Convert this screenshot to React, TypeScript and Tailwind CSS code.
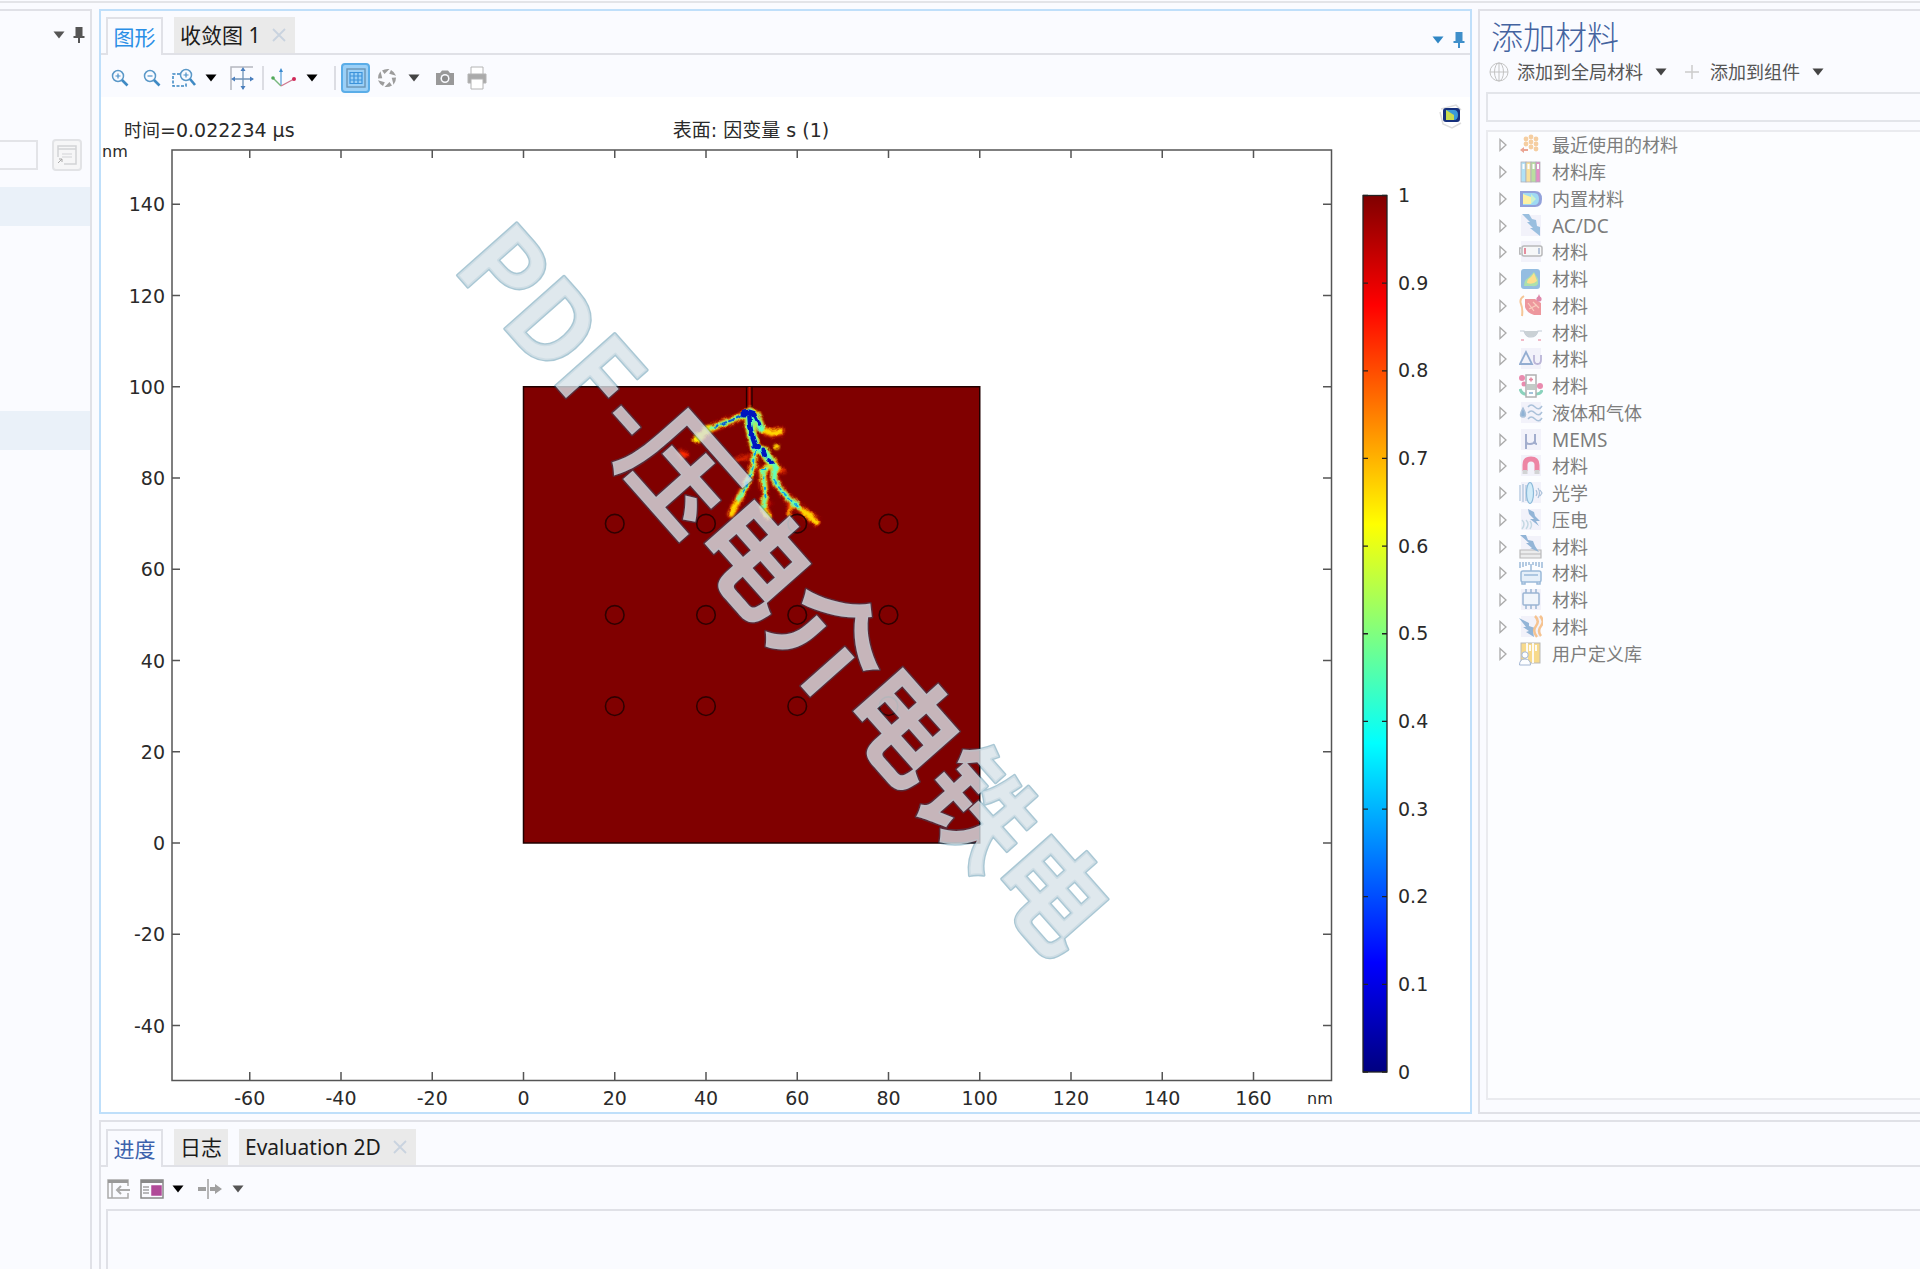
// Simulation workbench: 2D surface plot, material browser and progress pane.
import type { ReactNode } from "react";

const X0 = 523.5;
const Y0 = 843;
const UNIT = 4.5625;
const px = (v: number) => X0 + v * UNIT;
const py = (v: number) => Y0 - v * UNIT;

const X_TICKS = [-60, -40, -20, 0, 20, 40, 60, 80, 100, 120, 140, 160];
const Y_TICKS = [140, 120, 100, 80, 60, 40, 20, 0, -20, -40];
const LEGEND = ["1", "0.9", "0.8", "0.7", "0.6", "0.5", "0.4", "0.3", "0.2", "0.1", "0"];
const HOLES = [70, 50, 30].flatMap((y) => [20, 40, 60, 80].map((x) => ({ x, y })));

function Caret({ className = "text-black" }: { className?: string }) {
  return (
    <svg viewBox="0 0 12 8" className={`w-3 h-2 ${className}`} fill="currentColor">
      <path d="M0.5 0.5h11L6 7.5z" />
    </svg>
  );
}

function Pin({ className }: { className: string }) {
  return (
    <svg viewBox="0 0 12 18" className={`w-3 h-[18px] ${className}`} fill="currentColor">
      <path d="M2.5 1h7v9h2v2H7v5H5v-5H.5v-2h2z" />
    </svg>
  );
}

function Tint() {
  return <rect x="2" y="1" width="20" height="21" fill="#e4e2f4" stroke="none" opacity=".8" />;
}

const BOLT = "M3 0h7l3 5 4 1 1 6 3 1 0 9-10-8h3l-6-6h3z";

const icons: Record<string, ReactNode> = {
  recent: (
    <g fill="#f0a045">
      {[
        [7, 6], [12, 4], [17, 6], [7, 11], [12, 9], [17, 11], [12, 14], [17, 16],
      ].map(([x, y]) => (
        <circle key={`${x}-${y}`} cx={x} cy={y} r="2.4" />
      ))}
      <path d="M1 17l4-3v2h4v2H5v2z" fill="#d94f2b" />
    </g>
  ),
  library: (
    <g stroke="#667" strokeWidth=".8">
      <rect x="2" y="2" width="5" height="20" fill="#66c6ee" />
      <rect x="7" y="2" width="5" height="20" fill="#f5c43c" />
      <rect x="12" y="2" width="5" height="20" fill="#7bc143" />
      <rect x="17" y="2" width="4" height="20" fill="#d0218f" />
      <path d="M4.5 4v5M9.5 4v5M14.5 4v5M19 4v5" stroke="#fff" strokeWidth="2" />
    </g>
  ),
  builtin: (
    <g>
      <path d="M1 4h15q7 0 7 8t-7 8H1z" fill="#2b48b8" />
      <path d="M4 6h11q5 0 5 6t-5 6H4z" fill="#45b8e8" />
      <path d="M4 7l8 3v7H4z" fill="#ffe64a" />
      <path d="M12 7l5 5-5 5z" fill="#9be8a0" />
    </g>
  ),
  acdc: (
    <g>
      <Tint />
      <path d={BOLT} fill="#3a83c0" />
    </g>
  ),
  battery: (
    <g>
      <Tint />
      <rect x="3" y="6" width="20" height="10" rx="2" fill="#f2f2f2" stroke="#777" strokeWidth="1.5" />
      <path d="M2 8H0.7v6H2" fill="none" stroke="#777" strokeWidth="1.5" />
      <path d="M6 8v6" stroke="#d02040" strokeWidth="2" />
      <path d="M20 8v6" stroke="#4a6aa0" strokeWidth="1.5" />
    </g>
  ),
  surface: (
    <g>
      <rect x="2" y="2" width="19" height="20" rx="3" fill="#2e7fc4" />
      <path d="M5 19q0-6 4-8l6-6 4 7v5q-2 3-6 2z" fill="#5ec45c" />
      <path d="M8 16q0-4 4-6l3-4 3 8q-4 4-10 2z" fill="#ffc21e" />
    </g>
  ),
  bio: (
    <g>
      <path d="M6 5h10l6 4v12h-7q-8-3-9-8z" fill="#e0333d" />
      <path d="M5 2q-5 3-3 8t1 12" fill="none" stroke="#f09030" strokeWidth="2" />
      <circle cx="20" cy="5" r="2.6" fill="#c2185b" />
      <path d="M20 0l-2 5h4z" fill="#c2185b" />
      <path d="M9 9l6 8M14 8l6 6M10 15l8-4" stroke="#f6a080" strokeWidth="1.2" />
    </g>
  ),
  corrosion: (
    <g>
      <path d="M1 10h4q2 6 7 6t7-6h4" fill="none" stroke="#89a" strokeWidth="1.2" />
      <path d="M5 10h14q-2 6-7 6t-7-6z" fill="#9aa6ad" />
      <path d="M2 19h3M19 19h3" stroke="#e05070" strokeWidth="1.5" />
    </g>
  ),
  thermo: (
    <g fill="none">
      <Tint />
      <path d="M7 5L1 17h12z" stroke="#2c5fa5" strokeWidth="1.8" />
      <path d="M15 8v5q0 4 3.5 4T22 13V8" stroke="#7a6fb0" strokeWidth="1.8" />
    </g>
  ),
  fuel: (
    <g>
      <circle cx="3" cy="4" r="3" fill="#d81b60" />
      <circle cx="5" cy="10" r="2.5" fill="#d81b60" />
      <circle cx="21" cy="12" r="3" fill="#d81b60" />
      <path d="M1 15q2 6 7 5M16 20q6 0 7-4" stroke="#1aa87c" strokeWidth="3" fill="none" />
      <rect x="7" y="1" width="10" height="22" fill="#fff" stroke="#666" strokeWidth="1.5" />
      <rect x="8" y="10" width="8" height="6" fill="#8a9a90" />
      <path d="M12 3.500v4M10 5.500h4" stroke="#d01040" strokeWidth="1.5" />
      <path d="M10 19h4" stroke="#1060a0" strokeWidth="1.5" />
    </g>
  ),
  fluids: (
    <g fill="none" stroke="#5b86b5" strokeWidth="1.5">
      <Tint />
      <path d="M4 7q-5 9 0 9t0-9z" fill="#2469ad" />
      <path d="M9 6q3-4 7 0t7-1M9 12q3-4 7 0t7-1M9 18q3-4 7 0t7-1" />
    </g>
  ),
  mems: (
    <g fill="none">
      <Tint />
      <path d="M7 6v15M7 6v7q0 3 4 3t5-3V6v8q0 2 2 2" stroke="#4b5f9c" strokeWidth="2" />
    </g>
  ),
  magnet: (
    <g fill="none" strokeWidth="5">
      <Tint />
      <path d="M6 17v-6q0-6 6-6t6 6v6" stroke="#e0104c" />
      <path d="M6 16v4M18 16v4" stroke="#aaa" />
    </g>
  ),
  optics: (
    <g fill="none" stroke="#5b86b5" strokeWidth="1.2">
      <Tint />
      <path d="M1 4v16M4 3v18M7 4v16" />
      <ellipse cx="11" cy="12" rx="3.5" ry="10.5" fill="#a9dcf5" stroke="#1f79b5" />
      <path d="M17 9q2 3 0 6M19 7q3 5 0 10M21 9l2 3-2 3" />
    </g>
  ),
  piezo: (
    <g>
      <Tint />
      <path d="M9 1l6 3 1 4 5 5h-4l3 5-9-7h4l-5-5z" fill="#2c6fb0" />
      <path d="M3 12q4 4 0 9M7 12q4 4 0 9M11 13q3 4 0 8" fill="none" stroke="#8fb5c9" strokeWidth="1.5" />
    </g>
  ),
  plasma: (
    <g>
      <Tint />
      <path d="M1 15h21v8H1zM1 19h21" fill="#dcdcdc" stroke="#777" strokeWidth="1.2" />
      <path d="M1 0h6l2 5 5 1 2 5 4 6-9-4h2l-6-5h3z" fill="#2c6fb0" />
    </g>
  ),
  rf: (
    <g fill="none" stroke="#3d7ab5" strokeWidth="1.5">
      <path d="M1 1v6M4 1v5M7 1v4M10 1v3M14 1v3M17 1v4M20 1v5M23 1v6M12 3v7" />
      <rect x="2" y="10" width="20" height="11" rx="2" fill="#cfe2f5" />
      <path d="M5 14h14M3 21v2h3v-2M18 21v2h3v-2" />
    </g>
  ),
  chip: (
    <g stroke="#3c6da8" strokeWidth="1.5">
      <Tint />
      <path d="M7 1v4M12 1v4M17 1v4M7 17v4M12 17v4M17 17v4" />
      <rect x="4" y="5" width="16" height="12" rx="1" fill="#e8eef8" />
    </g>
  ),
  heat: (
    <g>
      <Tint />
      <path d="M0 3l10 5v3l6 2-2 3 1 6-8-5 3-1-6-4h3z" fill="#2c6fb0" />
      <path d="M16 1q5 5 1 10t1 11M21 1q5 5 1 10t0 10" fill="none" stroke="#f08a24" strokeWidth="2.5" />
    </g>
  ),
  user: (
    <g>
      <rect x="2" y="1" width="19" height="20" fill="#f4b81c" stroke="#777" strokeWidth="1" />
      <path d="M8 1v20M14 1v20M11 3v6M17 3v6" stroke="#fff" strokeWidth="1.8" />
      <circle cx="6" cy="13" r="3.2" fill="#fff" stroke="#4a70a8" />
      <path d="M0.5 23q0-6 5.500-6t5.500 6z" fill="#fff" stroke="#4a70a8" />
    </g>
  ),
};

const MATERIALS = [
  { icon: "recent", label: "最近使用的材料" },
  { icon: "library", label: "材料库" },
  { icon: "builtin", label: "内置材料" },
  { icon: "acdc", label: "AC/DC" },
  { icon: "battery", label: "材料" },
  { icon: "surface", label: "材料" },
  { icon: "bio", label: "材料" },
  { icon: "corrosion", label: "材料" },
  { icon: "thermo", label: "材料" },
  { icon: "fuel", label: "材料" },
  { icon: "fluids", label: "液体和气体" },
  { icon: "mems", label: "MEMS" },
  { icon: "magnet", label: "材料" },
  { icon: "optics", label: "光学" },
  { icon: "piezo", label: "压电" },
  { icon: "plasma", label: "材料" },
  { icon: "rf", label: "材料" },
  { icon: "chip", label: "材料" },
  { icon: "heat", label: "材料" },
  { icon: "user", label: "用户定义库" },
];

function ToolButton({
  title,
  className,
  children,
}: {
  title: string;
  className: string;
  children: ReactNode;
}) {
  return (
    <button
      type="button"
      aria-label={title}
      className={`flex items-center justify-center h-[30px] shrink-0 ${className}`}
    >
      {children}
    </button>
  );
}

function Magnifier({ minus = false }: { minus?: boolean }) {
  return (
    <svg viewBox="0 0 18 18" className="w-[18px] h-[18px]" fill="none">
      <circle cx="7" cy="7" r="5.5" stroke="#5a98c8" strokeWidth="1.5" />
      <path d="M11 11l5.500 5.500" stroke="#3f8ac4" strokeWidth="2.6" />
      <path d={minus ? "M4.5 7h5" : "M4.5 7h5M7 4.5v5"} stroke="#4a90c8" strokeWidth="1.2" />
    </svg>
  );
}

function ActiveTab({ className, children }: { className: string; children: ReactNode }) {
  return (
    <button
      type="button"
      className={`w-[57px] h-[38px] shrink-0 -mb-[2px] border-2 border-b-0 border-[#e0e1e7] bg-[#fafbff] text-[21px] leading-8 ${className}`}
    >
      {children}
    </button>
  );
}

function Tab({ closable = false, children }: { closable?: boolean; children: ReactNode }) {
  return (
    <div className="flex items-center h-9 shrink-0 gap-3 px-[6px] bg-[#eaeaea]">
      <button type="button" className="text-[21px] leading-8 text-[#1c1c1c] whitespace-nowrap">
        {children}
      </button>
      {closable && (
        <button type="button" aria-label="关闭" className="pr-[3px]">
          <svg viewBox="0 0 14 14" className="w-[14px] h-[14px]" stroke="#c9d3df" strokeWidth="1.8">
            <path d="M1 1l12 12M13 1L1 13" />
          </svg>
        </button>
      )}
    </div>
  );
}

// Damage branches of the phase field, in plot pixels times three.
const BRANCHES = {
  left: "M325 130L290 145 250 160 205 180 172 207",
  trunk: "M328 128L330 165 338 205 347 235",
  right: "M347 235L372 243 390 272 406 292 402 330 430 368 455 394 478 412 500 432 530 455",
  lower: "M345 235L342 280 325 330 308 365 290 400 274 432",
  middle: "M385 295L366 300 370 325 374 355 377 380 369 412 384 440",
  hook: "M330 126L348 142 362 175 392 190 422 184",
};

function Damage() {
  return (
    <g
      transform="translate(640 370) scale(.3333)"
      fill="none"
      strokeLinecap="round"
      strokeLinejoin="round"
      filter="url(#rough)"
    >
      <g filter="url(#soft)">
        <g stroke="#f02800" strokeWidth="24" opacity=".8">
          {Object.values(BRANCHES).map((d) => (
            <path key={d} d={d} />
          ))}
        </g>
        <path d="M402 300l30 4M448 396l2 44M286 270l34-8" stroke="#e02800" strokeWidth="14" />
        <path d="M108 252l18-16 22 18-20 16z" fill="#ff2c00" />
        <circle cx="390" cy="402" r="6" fill="#d01000" />
      </g>
      <g filter="url(#soft2)">
        <g stroke="#ffd800" strokeWidth="17">
          {Object.values(BRANCHES).map((d) => (
            <path key={d} d={d} />
          ))}
          <path d={BRANCHES.trunk} strokeWidth="31" />
          <path d="M325 130l17 0 16 34M347 235l25 8 18 29 14 20" strokeWidth="28" />
        </g>
        <circle cx="410" cy="230" r="9" fill="#ffd000" />
        <path d="M403 296l18 4M456 396l-8 40" stroke="#ffb000" strokeWidth="9" />
        <path d="M207 177l-8 5M176 202l-4 5" stroke="#ffee00" strokeWidth="24" />
      </g>
      <g filter="url(#soft2)">
        <g stroke="#5cffc0" strokeWidth="10">
          <path d="M325 130L290 145 250 160 215 174" />
          <path d={BRANCHES.trunk} strokeWidth="22" />
          <path d="M347 235L372 243 390 272 406 292 402 330 430 368 455 394 478 412" strokeWidth="14" />
          <path d="M347 235L372 243 390 272" strokeWidth="21" />
          <path d="M345 235L342 280 325 330 308 365 294 390" />
          <path d="M385 295L366 300 370 325 374 355 377 380 369 412" />
          <path d="M330 126L348 142 362 175" strokeWidth="21" />
        </g>
      </g>
      <g filter="url(#soft3)">
        <g stroke="#10a0e8" strokeWidth="6" strokeDasharray="10 14">
          <path d="M402 330L430 368 455 394 474 410" />
          <path d="M345 245L342 280 325 330 308 365" />
          <path d="M366 297l18 0M370 324v4M375 353v4M376 378v4" />
          <path d="M305 138L290 145 250 160 226 170" stroke="#1060d0" strokeDasharray="16 9" />
        </g>
        <g stroke="#0014c0">
          <path d="M314 130L328 128 340 132" strokeWidth="19" />
          <path d="M328 135L330 165 338 205 347 230" strokeWidth="13" />
          <path d="M342 130L352 150 358 164" strokeWidth="12" />
          <path d="M345 229l10 1" strokeWidth="16" />
          <path d="M370 238l6 18M384 266l14 10" strokeWidth="11" />
        </g>
      </g>
    </g>
  );
}

function SurfacePlot() {
  return (
    <svg
      viewBox="101 97 1369 1015"
      className="block w-full h-auto bg-white"
      fontFamily='"DejaVu Sans", "Noto Sans CJK SC", sans-serif'
      fontSize="19"
      fill="#2a2a2a"
    >
      <defs>
        <linearGradient id="jet" x1="0" y1="0" x2="0" y2="1">
          <stop offset="0" stopColor="#800000" />
          <stop offset=".125" stopColor="#ff0000" />
          <stop offset=".375" stopColor="#ffff00" />
          <stop offset=".625" stopColor="#00ffff" />
          <stop offset=".875" stopColor="#0000ff" />
          <stop offset="1" stopColor="#000080" />
        </linearGradient>
        <filter id="rough" x="-20%" y="-20%" width="140%" height="140%">
          <feTurbulence type="fractalNoise" baseFrequency=".05" numOctaves="2" seed="4" />
          <feDisplacementMap in="SourceGraphic" scale="14" xChannelSelector="R" yChannelSelector="G" />
        </filter>
        <filter id="soft" x="-20%" y="-20%" width="140%" height="140%">
          <feGaussianBlur stdDeviation="5" />
        </filter>
        <filter id="soft2" x="-20%" y="-20%" width="140%" height="140%">
          <feGaussianBlur stdDeviation="3" />
        </filter>
        <filter id="soft3" x="-20%" y="-20%" width="140%" height="140%">
          <feGaussianBlur stdDeviation="1" />
        </filter>
      </defs>

      <text x="124" y="137">
        <tspan fontSize="18">时间</tspan>=0.022234 µs
      </text>
      <text x="751" y="137" textAnchor="middle">
        表面: 因变量 s (1)
      </text>
      <text x="102" y="157" fontSize="16">nm</text>
      <text x="1307" y="1104" fontSize="16">nm</text>

      <g fill="none" stroke="#555" strokeWidth="1.5">
        <rect x="172" y="150" width="1159.5" height="930.5" />
        {X_TICKS.map((t) => (
          <path key={t} d={`M${px(t)} 150v8M${px(t)} 1080v-8`} />
        ))}
        {Y_TICKS.map((t) => (
          <path key={t} d={`M172 ${py(t)}h8M1331 ${py(t)}h-8`} />
        ))}
      </g>
      {X_TICKS.map((t) => (
        <text key={t} x={px(t)} y="1105" textAnchor="middle">
          {t}
        </text>
      ))}
      {Y_TICKS.map((t) => (
        <text key={t} x="165" y={py(t) + 7} textAnchor="end">
          {t}
        </text>
      ))}

      <rect x={px(0)} y={py(100)} width={100 * UNIT} height={100 * UNIT} fill="#800000" stroke="#200000" strokeWidth="1.5" />
      <path d="M749.5 387v22" stroke="#c01000" strokeWidth="2" />
      <path d="M746.5 387v21M752 387v21" stroke="#200" strokeWidth="1.3" />
      <Damage />
      {HOLES.map(({ x, y }) => (
        <circle key={`${x}-${y}`} cx={px(x)} cy={py(y)} r="9.3" fill="none" stroke="#300000" strokeWidth="1.6" />
      ))}

      <rect x="1363" y="195.5" width="24" height="876.5" fill="url(#jet)" stroke="#222" strokeWidth="1.3" />
      {LEGEND.map((label, i) => (
        <g key={label}>
          <path
            d={`M1363 ${195.5 + i * 87.65}h5M1387 ${195.5 + i * 87.65}h-5`}
            stroke="#222"
            strokeWidth="1.3"
          />
          <text x="1398" y={202 + i * 87.65}>
            {label}
          </text>
        </g>
      ))}

      <g transform="translate(1438 104)">
        <path d="M3 5L18 1l5 5M2 8l3 12 9 4 9-5" fill="none" stroke="#ddd" strokeWidth="1.5" />
        <rect x="5" y="4" width="17" height="14" rx="3" fill="#16307c" />
        <path d="M8 6h8q4 0 4 5t-4 5H8z" fill="#3a9ad8" />
        <path d="M8 6l8 5v5H8z" fill="#c8dc50" />
      </g>

      {/* watermark */}
      <g
        transform="translate(451 268) rotate(48.500)"
        fontWeight="700"
        fontFamily='"Noto Sans CJK SC", sans-serif'
      >
        <text
          fontSize="112"
          fill="#d7e2e9"
          fillOpacity=".8"
          stroke="#1e6b8e"
          strokeOpacity=".38"
          strokeWidth="3"
          strokeLinejoin="round"
          style={{ paintOrder: "stroke" }}
        >
          <tspan fontSize="107">PDF-</tspan>
          <tspan dy="5">压电介电铁电</tspan>
        </text>
      </g>
    </svg>
  );
}

function GraphicsToolbar() {
  return (
    <div className="flex items-center h-[42px] pt-1 pl-[3px] bg-[#fafbff]">
      <ToolButton title="放大" className="w-8">
        <Magnifier />
      </ToolButton>
      <ToolButton title="缩小" className="w-8">
        <Magnifier minus />
      </ToolButton>
      <ToolButton title="缩放框" className="w-8">
        <svg viewBox="0 0 24 20" className="w-6 h-5" fill="none">
          <path d="M8 6H1v12h13v-3" stroke="#3a86c2" strokeWidth="1.5" strokeDasharray="3 1.500" />
          <circle cx="14" cy="7" r="5.5" stroke="#5a98c8" strokeWidth="1.5" />
          <path d="M18 11l5 6" stroke="#3f8ac4" strokeWidth="2.6" />
          <path d="M11.5 7h5M14 4.5v5" stroke="#4a90c8" strokeWidth="1.2" />
        </svg>
      </ToolButton>
      <ToolButton title="缩放选项" className="w-[22px]">
        <Caret />
      </ToolButton>
      <ToolButton title="缩放到窗口大小" className="w-10">
        <svg viewBox="0 0 24 24" className="w-6 h-6" fill="none">
          <path d="M1 24V1h22" stroke="#b5b8c0" strokeWidth="1.5" />
          <path d="M13 3v20M3 13h20" stroke="#6f93b8" strokeWidth="1.3" />
          <path d="M13 1l2.500 4h-5zM13 24l2.500-4h-5zM1 13l4-2.500v5zM24 13l-4-2.500v5z" fill="#4a7fbe" />
        </svg>
      </ToolButton>
      <span className="w-[2px] h-6 bg-[#dcdde3]" />
      <ToolButton title="视图方向" className="w-10">
        <svg viewBox="0 0 26 20" className="w-[26px] h-5" fill="none" strokeWidth="1.4">
          <path d="M10 18V3" stroke="#6aaade" />
          <path d="M10 18L2 10" stroke="#78b87e" />
          <path d="M10 18l13-7" stroke="#d07890" />
          <path d="M10 0l2 4H8z" fill="#3a8ad0" />
          <circle cx="2" cy="10" r="1.8" fill="#50a858" />
          <circle cx="23" cy="11" r="2" fill="#d02858" />
        </svg>
      </ToolButton>
      <ToolButton title="视图选项" className="w-4">
        <Caret />
      </ToolButton>
      <span className="w-[2px] h-6 ml-[14px] bg-[#dcdde3]" />
      <ToolButton title="显示栅格" className="w-[29px] ml-[5px] rounded-sm border-2 border-[#5aade8] bg-[#9bd0f7]">
        <svg viewBox="0 0 20 20" className="w-5 h-5" fill="none">
          <rect x="1" y="1" width="18" height="18" stroke="#6a95b5" strokeWidth="1.4" />
          <path d="M4 4.5h12v11H4zM4 8h12M4 12h12M8 4v12M12 4v12" stroke="#3b92da" strokeWidth="1.2" />
        </svg>
      </ToolButton>
      <ToolButton title="场景" className="w-[34px]">
        <svg viewBox="0 0 20 20" className="w-5 h-5" fill="#9c9c9c">
          {[0, 60, 120, 180, 240, 300].map((a) => (
            <path key={a} d="M5 2.500Q8 0.500 12.500 1L7.500 6z" transform={`rotate(${a} 10 10)`} />
          ))}
        </svg>
      </ToolButton>
      <ToolButton title="场景选项" className="w-5">
        <Caret className="text-[#444]" />
      </ToolButton>
      <ToolButton title="图像快照" className="w-[42px]">
        <svg viewBox="0 0 20 16" className="w-5 h-4">
          <path d="M1 3h4l2-2.500h6L15 3h4v12H1z" fill="#999" />
          <circle cx="10" cy="8.5" r="4.5" fill="#fafbff" />
          <circle cx="10" cy="8.5" r="3" fill="#8c8c8c" />
        </svg>
      </ToolButton>
      <ToolButton title="打印" className="w-[22px]">
        <svg viewBox="0 0 20 24" className="w-5 h-6" stroke="#b4b4b4">
          <path d="M4 1h12v8H4z" fill="#fff" />
          <path d="M1 8h18v9H1z" fill="#aaa" />
          <path d="M4 13h12v10H4z" fill="#fff" />
        </svg>
      </ToolButton>
    </div>
  );
}

function SettingsStrip() {
  return (
    <aside className="w-[92px] shrink-0 border-t-2 border-r-2 border-[#e0e1e7]">
      <div className="flex justify-end items-center gap-2 h-12 pr-[5px]">
        <Caret className="text-[#555]" />
        <Pin className="text-[#555]" />
      </div>
      <div className="flex items-center gap-[14px] mt-20 pr-2">
        <input
          type="text"
          aria-label="标签"
          className="flex-1 min-w-0 h-[30px] border-2 border-l-0 border-[#e3e4e8]"
        />
        <button
          type="button"
          aria-label="编辑"
          className="flex items-center justify-center w-[30px] h-8 rounded-sm border-2 border-[#e2e3e6] bg-[#f6f6f7]"
        >
          <svg viewBox="0 0 20 20" className="w-5 h-5" fill="none" stroke="#d2d3d6">
            <path d="M1 12V1h18v18H7M1 4h18" strokeWidth="1.5" />
            <path d="M5 9h10M5 12h10" />
            <path d="M1 18l4-4M2 14h3v3" stroke="#aaa" />
          </svg>
        </button>
      </div>
      <div className="h-[39px] mt-4 bg-[#eaf1f9]" />
      <div className="h-[39px] mt-[185px] bg-[#eaf1f9]" />
    </aside>
  );
}

function GraphicsPanel() {
  return (
    <section className="flex-1 min-w-0 border-2 border-[#bfdffa]">
      <div className="flex items-end gap-[11px] h-11 pl-[5px] border-b-2 border-[#e0e1e7]">
        <ActiveTab className="text-[#2a8fe6]">图形</ActiveTab>
        <Tab closable>收敛图 1</Tab>
        <div className="flex items-end gap-[9px] h-9 ml-auto pb-1 pr-[5px]">
          <Caret className="mb-[5px] text-[#2f86c4]" />
          <Pin className="text-[#3f8fca]" />
        </div>
      </div>
      <GraphicsToolbar />
      <SurfacePlot />
    </section>
  );
}

function MaterialPanel() {
  return (
    <section className="flex flex-col w-[442px] shrink-0 border-2 border-r-0 border-[#e0e1e7]">
      <h1 className="pl-[11px] pt-[2px] text-[32px] leading-[48px] font-light text-[#44639f]">添加材料</h1>
      <div className="flex items-center h-[22px] pl-[9px] text-lg leading-[22px] text-[#555]">
        <svg viewBox="0 0 20 20" className="w-5 h-5 mr-2" fill="none" stroke="#c3c3c3">
          <circle cx="10" cy="10" r="9" />
          <ellipse cx="10" cy="10" rx="4.5" ry="9" />
          <path d="M10 1v18M1 10h18" />
        </svg>
        <button type="button" className="flex items-center gap-3">
          添加到全局材料
          <Caret className="text-[#444]" />
        </button>
        <svg viewBox="0 0 14 14" className="w-[14px] h-[14px] ml-[18px] mr-[11px]" stroke="#ccc" strokeWidth="1.5">
          <path d="M7 0v14M0 7h14" />
        </svg>
        <button type="button" className="flex items-center gap-3">
          添加到组件
          <Caret className="text-[#444]" />
        </button>
      </div>
      <input
        type="search"
        aria-label="搜索"
        className="h-[30px] ml-[6px] mt-[9px] shrink-0 border-2 border-r-0 border-[#e3e5ea]"
      />
      <div className="flex-1 ml-[6px] mt-2 mb-3 border-2 border-r-0 border-[#eaebef] bg-[#fcfdff]">
        <ul className="grid auto-rows-fr h-[535px]">
          {MATERIALS.map(({ icon, label }, i) => (
            <li key={i} className="flex items-center min-h-0 pl-[11px]">
              <button type="button" aria-label="展开" className="w-5">
                <svg viewBox="0 0 8 14" className="w-2 h-[14px]" fill="none" stroke="#aaa" strokeWidth="1.3">
                  <path d="M1 1.5v11L7 7z" />
                </svg>
              </button>
              <svg viewBox="0 0 24 24" className="w-6 h-6 opacity-50">
                {icons[icon]}
              </svg>
              <span
                className={`ml-[9px] leading-6 text-[#7d7d7d] ${/^[A-Z]/.test(label) ? "text-[19px]" : "text-lg"}`}
              >
                {label}
              </span>
            </li>
          ))}
        </ul>
      </div>
    </section>
  );
}

function ProgressPanel() {
  return (
    <section className="flex flex-col flex-1 border-t-2 border-l-2 border-[#e0e1e7]">
      <div className="flex items-end gap-[11px] h-[45px] pl-[5px] border-b-2 border-[#e0e1e7]">
        <ActiveTab className="text-[#3c62ac]">进度</ActiveTab>
        <Tab>日志</Tab>
        <Tab closable>Evaluation 2D</Tab>
      </div>
      <div className="flex items-center h-[42px] pt-[2px] pl-[3px]">
        <ToolButton title="返回" className="w-[30px]">
          <svg viewBox="0 0 24 20" className="w-6 h-5" fill="none" stroke="#aaa" strokeWidth="1.5">
            <path d="M21 14v5H1V1h20v6" />
            <path d="M1 2.5h20" stroke="#999" strokeWidth="3" />
            <path d="M5 4v15" />
            <path d="M10 11h13M14 7l-4 4 4 4" strokeWidth="2" />
          </svg>
        </ToolButton>
        <ToolButton title="布局" className="w-9">
          <svg viewBox="0 0 24 20" className="w-6 h-5" fill="none" stroke="#888" strokeWidth="1.5">
            <rect x="1" y="1" width="22" height="18" />
            <path d="M1 2.5h22" strokeWidth="3" />
            <path d="M3 8h6M3 11h6M3 14h6" stroke="#777" strokeWidth="1.2" />
            <rect x="12" y="7" width="9" height="9" fill="#b04a98" stroke="#b04a98" />
          </svg>
        </ToolButton>
        <ToolButton title="布局选项" className="w-4">
          <Caret />
        </ToolButton>
        <ToolButton title="移动" className="w-12">
          <svg viewBox="0 0 24 20" className="w-6 h-5" stroke="#a0a0a0">
            <path d="M0 10h8" strokeWidth="4" />
            <path d="M10 0v20" strokeWidth="1.5" />
            <path d="M12 8h5V5l7 5-7 5v-3h-5z" fill="#a0a0a0" stroke="none" />
          </svg>
        </ToolButton>
        <ToolButton title="移动选项" className="w-2">
          <Caret className="shrink-0 text-[#555]" />
        </ToolButton>
      </div>
      <div className="flex-1 min-h-12 ml-[5px] border-t-2 border-l-2 border-[#e0e1e7]" />
    </section>
  );
}

export default function App() {
  return (
    <div className="flex flex-col min-h-screen overflow-hidden bg-[#fafbff] font-['Noto_Sans','Noto_Sans_CJK_SC',sans-serif]">
      <header className="h-[3px] border-b-2 border-[#e3e4e8]" />
      <main className="flex flex-1 gap-[7px] pt-[6px]">
        <SettingsStrip />
        <div className="flex flex-col flex-1 min-w-0 gap-[6px]">
          <div className="flex gap-[6px]">
            <GraphicsPanel />
            <MaterialPanel />
          </div>
          <ProgressPanel />
        </div>
      </main>
    </div>
  );
}
